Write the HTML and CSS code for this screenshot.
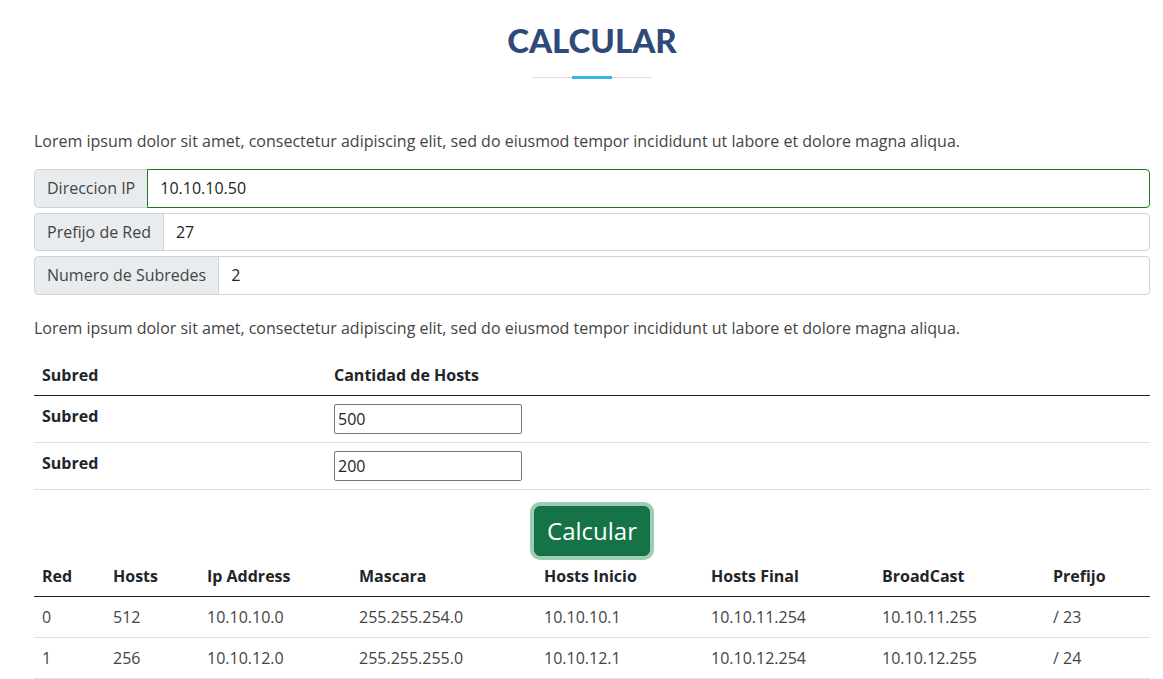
FILE: index.html
```html
<!DOCTYPE html>
<html lang="es">
<head>
<meta charset="utf-8">
<title>Calcular</title>
<link rel="stylesheet" href="styles.css">
</head>
<body>
<main class="container">
  <header class="section-title">
    <h2>CALCULAR</h2>
    <div class="divider"><span class="divider-bar"></span></div>
  </header>

  <p class="lead-text">Lorem ipsum dolor sit amet, consectetur adipiscing elit, sed do eiusmod tempor incididunt ut labore et dolore magna aliqua.</p>

  <div class="input-group">
    <span class="input-label">Direccion IP</span>
    <input class="input-field focused" type="text" value="10.10.10.50">
  </div>
  <div class="input-group">
    <span class="input-label">Prefijo de Red</span>
    <input class="input-field" type="text" value="27">
  </div>
  <div class="input-group">
    <span class="input-label">Numero de Subredes</span>
    <input class="input-field" type="text" value="2">
  </div>

  <p class="lead-text second">Lorem ipsum dolor sit amet, consectetur adipiscing elit, sed do eiusmod tempor incididunt ut labore et dolore magna aliqua.</p>

  <table class="data-table subnets">
    <thead>
      <tr><th class="col-sub">Subred</th><th>Cantidad de Hosts</th></tr>
    </thead>
    <tbody>
      <tr><th>Subred</th><td><input class="host-input" type="text" value="500"></td></tr>
      <tr><th>Subred</th><td><input class="host-input" type="text" value="200"></td></tr>
    </tbody>
  </table>

  <div class="actions">
    <button class="btn-calc" type="button">Calcular</button>
  </div>

  <table class="data-table results">
    <thead>
      <tr>
        <th class="c1">Red</th><th class="c2">Hosts</th><th class="c3">Ip Address</th><th class="c4">Mascara</th>
        <th class="c5">Hosts Inicio</th><th class="c6">Hosts Final</th><th class="c7">BroadCast</th><th class="c8">Prefijo</th>
      </tr>
    </thead>
    <tbody>
      <tr><td>0</td><td>512</td><td>10.10.10.0</td><td>255.255.254.0</td><td>10.10.10.1</td><td>10.10.11.254</td><td>10.10.11.255</td><td>/ 23</td></tr>
      <tr><td>1</td><td>256</td><td>10.10.12.0</td><td>255.255.255.0</td><td>10.10.12.1</td><td>10.10.12.254</td><td>10.10.12.255</td><td>/ 24</td></tr>
    </tbody>
  </table>
</main>
</body>
</html>
```

FILE: styles.css
```css
* { box-sizing: border-box; }
html, body { margin: 0; padding: 0; background: #fff; }
body {
  font-family: "Open Sans", "Liberation Sans", sans-serif;
  font-size: 16px;
  line-height: 24px;
  color: #444444;
}
.container {
  width: 1116px;
  margin-left: 34px;
}
.section-title {
  padding-top: 20px;
  display: flex;
  flex-direction: column;
  align-items: center;
}
.section-title h2 {
  margin: 0;
  font-family: Lato, "Open Sans", sans-serif;
  font-weight: 900;
  font-size: 33px;
  line-height: 41px;
  color: #2f4a7a;
  letter-spacing: 0;
}
.divider {
  margin-top: 16px;
  width: 120px;
  height: 1px;
  background: #dddddd;
  display: flex;
  justify-content: center;
  align-items: center;
}
.divider-bar {
  display: block;
  width: 40px;
  height: 3px;
  background: #3bb1e6;
}
.lead-text {
  margin: 51px 0 16px;
}
.lead-text.second {
  margin-top: 21px;
  margin-bottom: 15px;
}
.input-group {
  display: flex;
  height: 38.5px;
  margin-bottom: 5px;
}
.input-label {
  display: flex;
  align-items: center;
  padding: 0 12px;
  background: #e9ecef;
  border: 1px solid #ced4da;
  border-radius: 4px 0 0 4px;
  color: #444;
  white-space: nowrap;
}
.input-field {
  flex: 1;
  min-width: 0;
  margin-left: -1px;
  padding: 0 12px;
  border: 1px solid #ced4da;
  border-radius: 0 4px 4px 0;
  font-family: inherit;
  font-size: 16px;
  color: #212529;
  background: #fff;
  outline: none;
}
.input-field.focused {
  border-color: #1a7a1a;
}
.data-table {
  width: 100%;
  border-collapse: collapse;
  margin-bottom: 16px;
}
.data-table th,
.data-table td {
  padding: 8px;
  text-align: left;
  vertical-align: top;
  border-bottom: 1px solid #dee2e6;
}
.data-table th {
  font-weight: 700;
  color: #212529;
}
.data-table thead th {
  border-bottom: 1px solid #212529;
}
.data-table td {
  color: #444;
}
.subnets .col-sub { width: 292px; }
.host-input {
  display: block;
  width: 188px;
  height: 30px;
  padding: 1px 3px;
  border: 1px solid #767676;
  border-radius: 2px;
  font-family: "Open Sans", sans-serif;
  font-size: 16px;
  color: #212529;
}
.actions {
  display: flex;
  justify-content: center;
}
.btn-calc {
  height: 50px;
  width: 116px;
  padding: 0;
  border: 1px solid #146c43;
  border-radius: 6px;
  background: #157347;
  color: #fff;
  font-family: "Open Sans", sans-serif;
  font-size: 24px;
  box-shadow: 0 0 0 4px #9ccdb6;
  cursor: pointer;
}
.results { margin-bottom: 0; }
.results .c1 { width: 71px; }
.results .c2 { width: 94px; }
.results .c3 { width: 152px; }
.results .c4 { width: 185px; }
.results .c5 { width: 167px; }
.results .c6 { width: 171px; }
.results .c7 { width: 171px; }
.results .c8 { width: 105px; }
```
